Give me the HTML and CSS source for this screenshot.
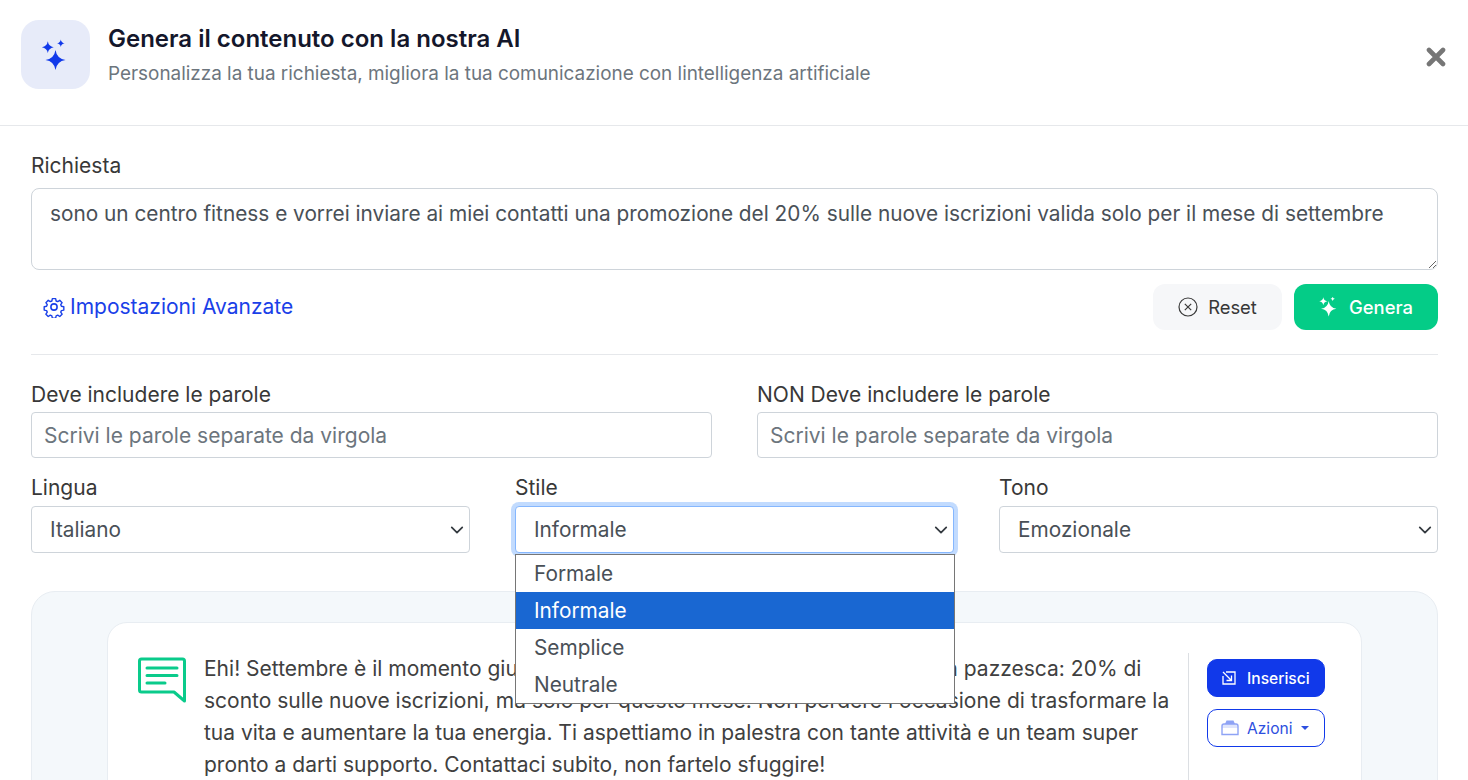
FILE: index.html
```html
<!DOCTYPE html>
<html lang="it">
<head>
    <meta charset="UTF-8">
    <meta name="viewport" content="width=device-width, initial-scale=1.0">
    <title>Genera il contenuto con la nostra AI</title>
    <link rel="stylesheet" href="styles.css">
</head>
<body>

    <div class="modal-header">
        <div class="header-icon">
            <svg width="32" height="32" viewBox="0 0 32 32" fill="#1139ea">
                <path d="M15.500 11Q16.800 19.700 25.500 21Q16.800 22.300 15.500 31Q14.200 22.300 5.500 21Q14.200 19.700 15.500 11Z"/>
                <path d="M7.800 2.300Q8.600 7.400 13.700 8.200Q8.600 9 7.800 14.100Q7 9 1.900 8.200Q7 7.400 7.800 2.300Z"/>
                <path d="M20.800 .4Q21.300 3.700 24.600 4.200Q21.300 4.700 20.800 8Q20.300 4.700 17 4.200Q20.300 3.700 20.800 .4Z"/>
            </svg>
        </div>
        <div class="header-text">
            <h1>Genera il contenuto con la nostra AI</h1>
            <p>Personalizza la tua richiesta, migliora la tua comunicazione con lintelligenza artificiale</p>
        </div>
        <svg class="close-icon" width="20" height="20" viewBox="0 0 20 20">
            <path d="M3 3L17 17M17 3L3 17" stroke="#767676" stroke-width="4.600" stroke-linecap="round"/>
        </svg>
    </div>

    <div class="modal-body">
        <label class="field-label">Richiesta</label>
        <textarea class="request-input">sono un centro fitness e vorrei inviare ai miei contatti una promozione del 20% sulle nuove iscrizioni valida solo per il mese di settembre</textarea>

        <div class="actions-row">
            <a class="advanced-link">
                <svg width="22" height="22" viewBox="0 0 24 24" fill="none" stroke="#1a40e8" stroke-width="1.700" stroke-linejoin="round">
                    <path d="M10 2.500h4l.6 2.900 1.900.8 2.500-1.600 2.800 2.800-1.600 2.500.8 1.900 2.900.6v4l-2.900.6-.8 1.900 1.600 2.500-2.800 2.800-2.500-1.600-1.900.8-.6 2.900h-4l-.6-2.900-1.900-.8-2.500 1.600-2.800-2.800 1.600-2.500-.8-1.900-2.900-.6v-4l2.900-.6.8-1.900-1.600-2.500 2.800-2.800 2.500 1.600 1.900-.8z" transform="translate(1.200 .6) scale(.9)"/>
                    <circle cx="12" cy="12" r="3.400"/>
                </svg>
                Impostazioni Avanzate
            </a>
            <div class="buttons">
                <button class="btn-reset">
                    <svg width="20" height="20" viewBox="0 0 20 20" fill="none" stroke="#3a3a3a" stroke-width="1.200">
                        <circle cx="10" cy="10" r="9"/>
                        <path d="M6.800 6.800l6.400 6.400M13.200 6.800l-6.400 6.400"/>
                    </svg>
                    Reset
                </button>
                <button class="btn-generate">
                    <svg width="20" height="20" viewBox="0 0 20 20" fill="#fff">
                        <path d="M9.700 4Q10.600 10.800 17.400 11.700Q10.600 12.600 9.700 19.400Q8.800 12.600 2 11.700Q8.800 10.800 9.700 4Z"/>
                        <path d="M4.300 .3Q4.800 3.800 8.300 4.300Q4.800 4.800 4.300 8.300Q3.800 4.800 .3 4.300Q3.800 3.800 4.300 .3Z"/>
                        <path d="M13.700 -.4Q14 1.500 15.900 1.800Q14 2.100 13.700 4Q13.400 2.100 11.500 1.800Q13.400 1.500 13.700 -.4Z"/>
                    </svg>
                    Genera
                </button>
            </div>
        </div>

        <hr class="divider">

        <div class="two-cols">
            <div>
                <label class="field-label tight">Deve includere le parole</label>
                <input class="text-input" type="text" placeholder="Scrivi le parole separate da virgola">
            </div>
            <div>
                <label class="field-label tight">NON Deve includere le parole</label>
                <input class="text-input" type="text" placeholder="Scrivi le parole separate da virgola">
            </div>
        </div>

        <div class="three-cols">
            <div>
                <label class="field-label tight">Lingua</label>
                <select class="select-input">
                    <option>Italiano</option>
                </select>
            </div>
            <div>
                <label class="field-label tight">Stile</label>
                <div class="select-wrap">
                    <select class="select-input focused">
                        <option>Informale</option>
                    </select>
                    <ul class="select-menu">
                        <li>Formale</li>
                        <li class="selected">Informale</li>
                        <li>Semplice</li>
                        <li>Neutrale</li>
                    </ul>
                </div>
            </div>
            <div>
                <label class="field-label tight">Tono</label>
                <select class="select-input">
                    <option>Emozionale</option>
                </select>
            </div>
        </div>

        <div class="results-panel">
            <div class="result-card">
                <svg class="chat-icon" width="50" height="48" viewBox="0 0 50 48" fill="none" stroke="#0acb8b" stroke-width="3" stroke-linecap="round" stroke-linejoin="round">
                    <path d="M4.500 2h41q2 0 2 2v40L37 35H4.500q-2 0-2-2V4q0-2 2-2z"/>
                    <path d="M10 11h30M10 18.500h30M10 26h18"/>
                </svg>
                <p class="result-text">Ehi! Settembre è il momento giusto per rimetterti in forma con questa offerta pazzesca: 20% di sconto sulle nuove iscrizioni, ma solo per questo mese. Non perdere l'occasione di trasformare la tua vita e aumentare la tua energia. Ti aspettiamo in palestra con tante attività e un team super pronto a darti supporto. Contattaci subito, non fartelo sfuggire!</p>
                <div class="result-actions">
                    <button class="btn-insert">
                        <svg width="16" height="16" viewBox="0 0 16 16" fill="none" stroke="#fff" stroke-width="1.300">
                            <path d="M5 2h9v12H2V6"/>
                            <path d="M2 2l8.500 8.500M5.500 10.500h5v-5"/>
                        </svg>
                        Inserisci
                    </button>
                    <button class="btn-actions">
                        <svg width="18" height="16" viewBox="0 1 18 16" fill="none">
                            <path d="M4 5L5.500 1.500h7L14 5z" fill="#8ea3f5"/>
                            <path d="M1 7q0-2 2-2h12q2 0 2 2v2H1z" fill="#dfe5fc"/>
                            <path d="M1 7q0-2 2-2h12q2 0 2 2v8.500H1z" stroke="#8ea3f5" stroke-width="1.400"/>
                        </svg>
                        Azioni
                        <span class="caret"></span>
                    </button>
                </div>
            </div>
        </div>
    </div>

</body>
</html>
```

FILE: styles.css
```css
* {
    box-sizing: border-box;
}

html, body {
    height: 780px;
    overflow: hidden;
}

body {
    margin: 0;
    background-color: #fff;
    font-family: 'Inter', 'Liberation Sans', sans-serif;
    font-size: 21px;
    color: #383838;
}

/* Header */
.modal-header {
    display: flex;
    align-items: flex-start;
    height: 126px;
    padding: 20px 21px;
    border-bottom: 1px solid #e6e8eb;
}

.header-icon {
    display: flex;
    align-items: center;
    justify-content: center;
    flex: none;
    width: 69px;
    height: 69px;
    border-radius: 18px;
    background-color: #e7ebf9;
}

.header-text {
    flex: 1;
    margin-left: 18px;
}

.header-text h1 {
    margin: 3px 0 0;
    font-size: 24px;
    line-height: 32px;
    font-weight: 600;
    color: #14172b;
}

.header-text p {
    margin: 6px 0 0;
    font-size: 18.900px;
    line-height: 26px;
    color: #6c757d;
}

.close-icon {
    flex: none;
    margin-top: 27px;
    margin-right: 1px;
}

/* Form */
.modal-body {
    padding: 24px 30px 0 31px;
}

.field-label {
    display: block;
    height: 30px;
    line-height: 31px;
    margin-bottom: 8px;
}

.field-label.tight {
    margin-bottom: 3px;
}

.request-input {
    display: block;
    width: 100%;
    height: 82px;
    padding: 10px 18px;
    border: 1px solid #ced4da;
    border-radius: 8px;
    font: inherit;
    font-size: 20.800px;
    line-height: 30px;
    color: #495057;
    resize: vertical;
    outline: none;
}

.actions-row {
    display: flex;
    align-items: center;
    justify-content: space-between;
    margin-top: 14px;
    padding-left: 12px;
}

.advanced-link {
    display: flex;
    align-items: center;
    gap: 5px;
    line-height: 30px;
    color: #1a40e8;
}

.buttons {
    display: flex;
    gap: 12px;
}

.buttons button {
    display: flex;
    align-items: center;
    justify-content: center;
    height: 46px;
    border: none;
    border-radius: 12px;
    font-family: inherit;
    font-size: 18.400px;
}

.btn-reset {
    gap: 10px;
    width: 129px;
    background-color: #f6f7f9;
    color: #383838;
}

.btn-generate {
    gap: 10px;
    width: 144px;
    background-color: #04cc87;
    color: #fff;
    font-weight: 500;
}

.divider {
    margin: 24px 0;
    border: none;
    border-top: 1px solid #e6e8eb;
}

.two-cols, .three-cols {
    display: grid;
    column-gap: 45px;
}

.two-cols {
    grid-template-columns: 1fr 1fr;
}

.three-cols {
    grid-template-columns: 1fr 1fr 1fr;
    margin-top: 14px;
}

.three-cols .field-label.tight {
    margin-bottom: 4px;
}

.text-input {
    display: block;
    width: 100%;
    height: 46px;
    padding: 0 12px;
    border: 1px solid #ced4da;
    border-radius: 4px;
    font: inherit;
    outline: none;
}

.text-input::placeholder {
    color: #6c757d;
    opacity: 1;
}

.select-input {
    display: block;
    width: 100%;
    height: 47px;
    padding: 0 36px 0 18px;
    border: 1px solid #ced4da;
    border-radius: 4px;
    font: inherit;
    font-size: 20.800px;
    color: #495057;
    background: #fff url("data:image/svg+xml,%3csvg xmlns='http://www.w3.org/2000/svg' viewBox='0 0 16 16'%3e%3cpath fill='none' stroke='%23343a40' stroke-linecap='round' stroke-linejoin='round' stroke-width='2' d='M2 5l6 6 6-6'/%3e%3c/svg%3e") no-repeat right 3px center / 18px 14px;
    appearance: none;
    outline: none;
}

.select-input.focused {
    border-color: #86b7fe;
    box-shadow: 0 0 0 4px rgba(13, 110, 253, 0.25);
}

.select-wrap {
    position: relative;
}

.select-menu {
    position: absolute;
    top: 48px;
    left: 0;
    right: -1px;
    z-index: 5;
    margin: 0;
    padding: 0;
    list-style: none;
    background-color: #fff;
    border: 1px solid #767676;
    font-size: 20.800px;
    color: #495057;
}

.select-menu li {
    height: 37px;
    padding-left: 18px;
    line-height: 38px;
}

.select-menu li.selected {
    background-color: #1967d2;
    color: #fff;
}

/* Generated text */
.results-panel {
    margin-top: 38px;
    padding: 30px 75px 40px;
    height: 300px;
    background-color: #f4f8fb;
    border: 1px solid #e8edf2;
    border-radius: 24px;
}

.result-card {
    display: flex;
    align-items: flex-start;
    padding: 30px 36px 30px 29px;
    height: 260px;
    background-color: #fff;
    border: 1px solid #e8edf2;
    border-radius: 20px;
}

.chat-icon {
    flex: none;
    margin-top: 4px;
}

.result-text {
    flex: 1;
    margin: 0 0 0 17px;
    padding-right: 16px;
    line-height: 32px;
    color: #404040;
}

.result-actions {
    display: flex;
    flex: none;
    flex-direction: column;
    gap: 12px;
    align-self: stretch;
    width: 137px;
    padding: 6px 0 0 18px;
    border-left: 1px solid #dcdfe3;
}

.result-actions button {
    display: flex;
    align-items: center;
    width: 118px;
    height: 38px;
    padding: 0 0 0 13px;
    border-radius: 10px;
    font-family: inherit;
    font-size: 15.600px;
}

.btn-insert {
    gap: 10px;
    border: 1px solid #1139ea;
    background-color: #1139ea;
    color: #fff;
    font-weight: 500;
}

.btn-actions {
    gap: 8px;
    border: 1px solid #1139ea;
    background-color: #fff;
    color: #2d4fe0;
}

.caret {
    border-top: 4px solid #2d4fe0;
    border-left: 4px solid transparent;
    border-right: 4px solid transparent;
}
```
